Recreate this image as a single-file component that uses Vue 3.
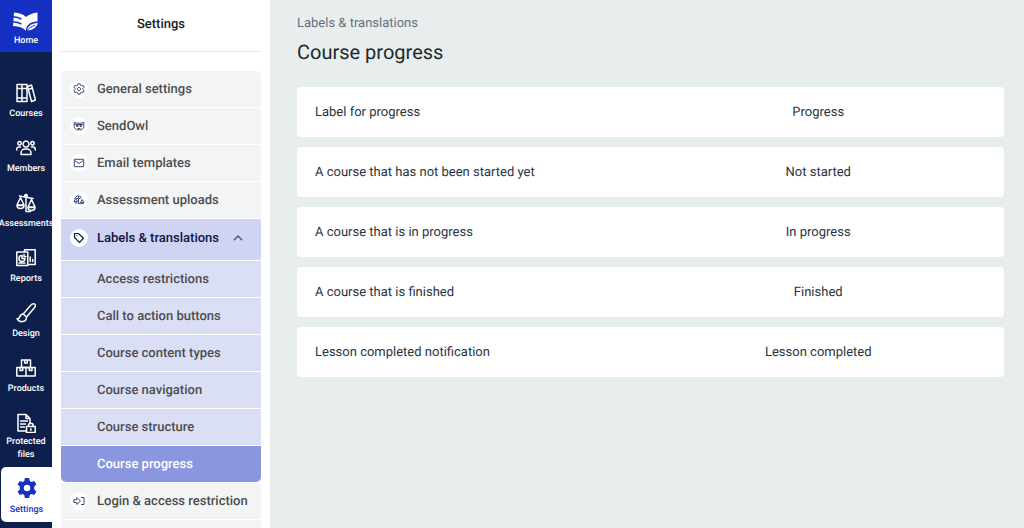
<template>
  <div class="layout">
    <!-- main rail -->
    <nav class="rail" aria-label="Main">
      <a href="#" class="home">
        <svg class="logo" viewBox="0 0 26 20" aria-hidden="true">
          <path fill="#fff" d="M1 .5C6 .8 10 2 13 5 16 2.500 20 .8 24.500.5v13L13 18.800C10 15.800 6 14.200 0 14z" />
          <path fill="none" stroke="#1531c4" stroke-width="1.500" d="M0 4.800c3.500.2 6 .9 8.500 2.400 M0 9.800c3.500.2 6 .9 8.500 2.400" />
          <path fill="#fff" stroke="#1531c4" stroke-width="1.300" d="M26 10c-7 .2-12.300 2.500-12.500 9 6.800.5 10.800-2.500 12.500-9z" />
          <path fill="none" stroke="#1531c4" stroke-width="1" d="M13.500 19.500c2-3 5-5.300 8.500-6.300" />
        </svg>
        <span>Home</span>
      </a>

      <div class="rail-items">
        <a v-for="item in railItems" :key="item.label" href="#" class="rail-item">
          <svg class="rail-icon" viewBox="0 0 20 20" aria-hidden="true">
            <path v-for="d in item.paths" :key="d" :d="d" />
          </svg>
          <span>{{ item.label }}</span>
        </a>
      </div>

      <a href="#" class="rail-item current" aria-current="page">
        <svg class="gear" viewBox="0 0 20 20" aria-hidden="true">
          <path fill-rule="evenodd" :d="gear" />
        </svg>
        <span>Settings</span>
      </a>
    </nav>

    <!-- settings menu -->
    <aside class="sidebar">
      <h2 class="sidebar-title">Settings</h2>
      <ul class="menu">
        <li v-for="m in topItems" :key="m.label">
          <a href="#" class="menu-row">
            <span class="dot">
              <svg viewBox="0 0 12 12" aria-hidden="true"><path v-for="d in m.paths" :key="d" :d="d" /></svg>
            </span>
            {{ m.label }}
          </a>
        </li>
        <li>
          <button type="button" class="menu-row group" :aria-expanded="open" @click="open = !open">
            <span class="dot strong">
              <svg viewBox="0 0 12 12" aria-hidden="true">
                <path d="M1.500 1.500h4l5 4.700-4 4.300-5-5z" />
                <path d="M3.500 3.700h.8" />
              </svg>
            </span>
            Labels &amp; translations
            <svg class="chevron" :class="{ closed: !open }" viewBox="0 0 10 6" aria-hidden="true"><path d="M.8 5.200 5 1l4.200 4.200" /></svg>
          </button>
          <ul v-if="open" class="submenu">
            <li v-for="s in subItems" :key="s">
              <a href="#" class="sub-row" :class="{ active: s === current }">{{ s }}</a>
            </li>
          </ul>
        </li>
        <li>
          <a href="#" class="menu-row">
            <span class="dot">
              <svg viewBox="0 0 12 12" aria-hidden="true">
                <path d="M.8 4.600h3V2.500L7.500 6 3.800 9.500V7.400h-3z" />
                <path d="M8 2.500h3v7H8" />
              </svg>
            </span>
            Login &amp; access restriction
          </a>
        </li>
        <li><a href="#" class="menu-row" aria-label="More settings"></a></li>
      </ul>
    </aside>

    <!-- content -->
    <main class="content">
      <p class="crumb">Labels &amp; translations</p>
      <h1 class="title">{{ current }}</h1>
      <dl class="cards">
        <div v-for="r in rows" :key="r.label" class="card">
          <dt>{{ r.label }}</dt>
          <dd>{{ r.value }}</dd>
        </div>
      </dl>
    </main>
  </div>
</template>

<script setup>
import { ref } from 'vue'

const open = ref(true)
const current = 'Course progress'

const gear = 'M7.900 0h4.200l.6 2.900 1.800 1 2.800-1 2.100 3.700-2.200 1.900v3l2.200 1.900-2.100 3.700-2.800-1-1.800 1-.6 2.900H7.900l-.6-2.900-1.800-1-2.800 1L.6 13.400l2.200-1.900v-3L.6 6.600l2.100-3.700 2.800 1 1.800-1z M10 6.800a3.200 3.200 0 1 0 0 6.400a3.200 3.200 0 1 0 0-6.400z'

const railItems = [
  {
    label: 'Courses',
    paths: ['M1 1.500h5v17H1z M6 1.500h5v17H6z M1 5.500h10 M1 15h10', 'M11.500 3.500l4-1.500 4 15-4 1.500z M12.500 6.500l3.500-1.200']
  },
  {
    label: 'Members',
    paths: [
      'M10 3a3 3 0 1 0 .01 0z M3.500 3.500a1.700 1.700 0 1 0 .01 0z M16.500 3.500a1.700 1.700 0 1 0 .01 0z',
      'M5 16.500v-1.500a4 4 0 0 1 4-4h2a4 4 0 0 1 4 4v1.500z M.8 12v-1a2 2 0 0 1 2-2h1.700 M19.200 12v-1a2 2 0 0 0-2-2h-1.700'
    ]
  },
  {
    label: 'Assessments',
    paths: [
      'M3.500 3 17 5.500 M10 2.500v16h4.500 M10 1.500a1.300 1.300 0 1 0 .01 0z',
      'M4.500 4.500 1 12h7z M1 12.500a3.500 3 0 0 0 7 0z',
      'M15.500 6.500 12 14h7z M12 14.500a3.500 3 0 0 0 7 0z'
    ]
  },
  {
    label: 'Reports',
    paths: ['M.8 4h11v13.500H.8z M8.500 4V1.800h10.700v14.700H12', 'M6 7.500a3 3 0 1 0 3 3H6z M8 6.500v2h2', 'M14.200 9v4.500 M16.700 11.500v2 M3 15h6']
  },
  {
    label: 'Design',
    paths: [
      'M18.800 1.200c-1.200-.7-3-.1-4.300 1.300L7.300 11l3.200 3 7.500-8.800c1.200-1.400 1.700-3.200.8-4z',
      'M7.300 11c-3 0-3.300 2-3.800 3.500-.4 1.200-1.300 1.400-2.500 1.200 2.600 4.500 9.500 3.800 9.500-1.700'
    ]
  },
  {
    label: 'Products',
    paths: ['M5.500 2h9v7.500h-9z M8.700 2v3h2.600V2', 'M.8 9.500H10v8.500H.8z M10 9.500h9.200v8.500H10z M4 9.500v3h2.700v-3 M13.300 9.500v3H16v-3']
  },
  {
    label: 'Protected files',
    paths: ['M9.500 18H2V1.500h8l4 4v5 M10 1.500v4h4 M4.500 8h7 M4.500 11h5 M4.500 14h4', 'M10.500 13.500h8.700v6h-8.700z M12.500 13.500v-1a2.300 2.300 0 0 1 4.700 0v1 M14.900 15.700v1.600']
  }
]

const topItems = [
  {
    label: 'General settings',
    paths: ['M5 .8h2l.5 1.500 1 .5 1.600-.4 1 1.800L10 5.400v1.200l1.100 1.200-1 1.800-1.600-.4-1 .5L7 11.200H5l-.5-1.500-1-.5-1.600.4-1-1.800L2 6.600V5.400L.9 4.200l1-1.800 1.600.4 1-.5z', 'M6 4.400a1.600 1.600 0 1 0 .01 0z']
  },
  {
    label: 'SendOwl',
    paths: ['M1.200 2.200l2 1h5.600l2-1v5.500L8.500 9.800h-5L1.200 7.700z', 'M3.500 5h1.500v1.500H3.500z M7 5h1.500v1.500H7z', 'M2 4.500h8 M4.500 8.500h3']
  },
  {
    label: 'Email templates',
    paths: ['M1.300 2.300h9.400v7.400H1.300z', 'M1.500 3.500l4.500 3 4.500-3']
  },
  {
    label: 'Assessment uploads',
    paths: ['M1.500 4.500 4 2h3l1.500 2 M5.500 2v7.500h2 M3 4.500h4.500', 'M2.500 4.500l-1.500 3h3.500z M1.500 9h3', 'M9 5.500l-1.500 3H11z M7.300 9.700h3.500']
  }
]

const subItems = [
  'Access restrictions',
  'Call to action buttons',
  'Course content types',
  'Course navigation',
  'Course structure',
  'Course progress'
]

const rows = [
  { label: 'Label for progress', value: 'Progress' },
  { label: 'A course that has not been started yet', value: 'Not started' },
  { label: 'A course that is in progress', value: 'In progress' },
  { label: 'A course that is finished', value: 'Finished' },
  { label: 'Lesson completed notification', value: 'Lesson completed' }
]
</script>

<style>
body { margin: 0; background: #e8eeee; }
</style>

<style scoped>
.layout {
  display: grid;
  grid-template-columns: 52px 218px 1fr;
  height: 100vh;
  overflow: hidden;
  font-family: Roboto, "Liberation Sans", sans-serif;
  font-size: 13px;
  text-rendering: geometricPrecision;
}
a { color: inherit; text-decoration: none; }
ul { list-style: none; margin: 0; padding: 0; }

/* rail */
.rail {
  display: flex; flex-direction: column;
  background: #0f1f4b; color: #fff;
  font-size: 9px; font-weight: 500; line-height: 13px; text-align: center;
}
.home {
  display: flex; flex-direction: column; align-items: center; gap: 3px;
  box-sizing: border-box; height: 52px; padding-top: 12px;
  background: #1531c4;
}
.logo { width: 26px; height: 20px; }
.rail-items { padding-top: 21px; }
.rail-item {
  display: flex; flex-direction: column; align-items: center; gap: 5px;
  box-sizing: border-box; min-height: 55px; padding-top: 10px;
}
.rail-items .rail-item:last-child { height: 64px; gap: 3px; }
.rail-icon {
  width: 20px; height: 20px; flex: none;
  fill: none; stroke: #fff; stroke-width: 1.5; stroke-linejoin: round; stroke-linecap: round;
}
.current {
  margin-left: 1px; gap: 6px;
  background: #fff; color: #1531c4;
  border-radius: 5px 0 0 5px;
}
.gear { width: 20px; height: 20px; margin-top: 1px; fill: #1531c4; }

/* settings menu */
.sidebar { background: #fff; padding: 0 9px; overflow: hidden; }
.sidebar-title {
  margin: 0 0 19px; height: 51px;
  border-bottom: 1px solid #dfe7e6;
  font-size: 13px; line-height: 50px; font-weight: 500; text-align: center; color: #16191d;
}
.menu {
  display: flex; flex-direction: column; gap: 1px;
  border-radius: 5px 5px 0 0; overflow: hidden;
}
.menu-row {
  display: flex; align-items: center; gap: 9px;
  box-sizing: border-box; width: 100%; height: 36px; padding: 0 9px;
  border: 0; background: #f3f5f4; color: #4b4d50;
  font: inherit; font-weight: 500; text-align: left; cursor: pointer;
}
.group { height: 41px; padding-bottom: 4px; background: #cfd4f3; color: #0b1347; }
.dot {
  display: grid; place-items: center; flex: none;
  width: 18px; height: 18px; border-radius: 50%; background: #fff;
}
.dot svg { width: 12px; height: 12px; fill: none; stroke: #3c4a7c; stroke-width: 1; }
.dot.strong svg { stroke: #0b1347; stroke-width: 1.2; }
.chevron { width: 10px; height: 6px; margin: 0 9px 0 auto; fill: none; stroke: #56585f; stroke-width: 1.4; }
.chevron.closed { transform: rotate(180deg); }
.submenu { display: flex; flex-direction: column; gap: 1px; margin-top: 1px; }
.sub-row {
  display: flex; align-items: center;
  height: 36px; padding-left: 36px;
  background: #dbdff5; color: #4b4d50; font-weight: 500;
}
.sub-row.active { background: #8b96e0; color: #fff; border-radius: 0 0 5px 5px; }

/* content */
.content { padding: 16px 20px 0 27px; }
.crumb { margin: 0; line-height: 16px; color: #666f80; }
.title { margin: 7px 0 22px; font-size: 20px; line-height: 26px; font-weight: 400; color: #25282b; }
.cards { display: flex; flex-direction: column; gap: 10px; margin: 0; }
.card {
  display: grid; grid-template-columns: 1fr 1fr; align-items: center;
  height: 50px; padding: 0 18px;
  background: #fff; border-radius: 4px; color: #2b3440;
}
.card dd { margin: 0; text-align: center; }
</style>
